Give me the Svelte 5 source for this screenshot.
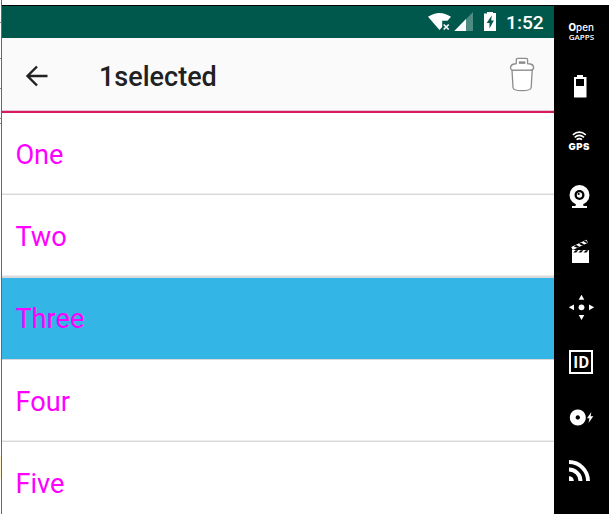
<script>
  const items = ['One', 'Two', 'Three', 'Four', 'Five'];
  const selected = 'Three';
</script>

<div class="window">
  <div class="edge">
    <i class="t1"></i><i class="t2"></i><i class="t3"></i><i class="t4"></i><i class="t5"></i><b></b>
  </div>
  <main class="screen">
    <header class="status">
      <svg class="signals" width="72" height="32" viewBox="0 0 72 32">
        <path d="M0 10.8Q11.5 3 23 10.8L19.5 14.8H14.2V21L11.5 24Z" fill="#fff" />
        <path d="M15.7 18.5l5 5m0-5l-5 5" stroke="#fff" stroke-width="1.7" />
        <path d="M45 6V25H26.3Z" fill="#4d8c82" />
        <path d="M38 13V25H26.3Z" fill="#fff" />
        <path d="M59 6.8V6h6v1h3v18H56V7.5h3Z" fill="#fff" />
        <path d="M63.7 9.5L58.7 17h2.8v5.5l4.4-8h-2.7Z" fill="#00574b" />
      </svg>
      <time>1:52</time>
    </header>
    <div class="toolbar">
      <svg class="back" width="24" height="24" viewBox="0 0 24 24">
        <path d="M22.5 12H3M12 2.5L2.5 12l9.5 9.5" fill="none" stroke="#212121" stroke-width="2.4" />
      </svg>
      <h1>1selected</h1>
      <svg class="trash" width="26" height="36" viewBox="0 0 26 36">
        <g fill="#fff" stroke="#8c8c8c" stroke-width="1.3">
          <path d="M3 13L4 30.5Q4.3 33.7 13 33.7T22.2 30.5L23.2 13Z" />
          <path d="M1.5 10.5Q2 7.6 5 7L7.3 6.6V3Q7.3 1.4 9 1.4H17Q18.6 1.4 18.6 3V6.6L21.4 7Q24.3 7.6 24.6 10.5Q24.6 13.2 21.5 13.2H4.7Q1.5 13.2 1.5 10.5Z" />
          <path d="M10.5 5H15.7V6.2H10.5Z" />
        </g>
      </svg>
    </div>
    <ul>
      {#each items as item}
        <li class:selected={item === selected}>{item}</li>
      {/each}
    </ul>
  </main>
  <aside>
    <svg viewBox="0 0 55 55">
      <text x="14.5" y="26.3" class="open" textLength="25.3"><tspan class="cap">O</tspan>pen</text>
      <text x="14.7" y="35" class="gapps" textLength="25.5" lengthAdjust="spacingAndGlyphs">GAPPS</text>
    </svg>
    <svg viewBox="0 0 55 55">
      <path d="M23 15h6v2h3.5v20.5H20V17h3ZM22 19v7h8v-7Z" fill-rule="evenodd" />
    </svg>
    <svg viewBox="0 0 55 55">
      <g fill="none" stroke="#fff" stroke-width="1.7">
        <path d="M18.8 19.8Q25.3 14.6 31.8 19.8M20.7 22.3Q25.3 18.5 30 22.3M22.6 24.6Q25.3 22.5 28 24.6" />
      </g>
      <text x="14.5" y="35" class="gps" textLength="21">GPS</text>
    </svg>
    <svg viewBox="0 0 55 55">
      <circle cx="25.5" cy="25" r="10" />
      <path d="M22 33.5h7l.5 2.5H33v2H18v-2h3.5Z" />
      <circle cx="25.5" cy="25" r="5" fill="#000" />
      <circle cx="25.5" cy="25" r="2.7" />
      <circle cx="24.7" cy="24" r="1.1" fill="#000" />
    </svg>
    <svg viewBox="0 0 55 55">
      <path d="M18 25H35V38H18ZM17.2 22L32.5 14.8l1.5 3L18.7 25Z" />
      <path d="M19.3 27.5l2.3-2.2h2.8L22.2 27.5ZM24.4 27.5l2.3-2.2h2.8L27.2 27.5ZM29.5 27.5l2.3-2.2h2.8L32.4 27.5ZM19.8 21.2l3.3 1.6 2.4-1.1-3.2-1.7ZM24.8 18.8l3.2 1.7 2.4-1.1-3.2-1.7ZM29.6 16.6l2.8 1.5 1.5-.7-2.4-1.8Z" fill="#000" />
    </svg>
    <svg viewBox="0 0 55 55">
      <circle cx="27.5" cy="27.3" r="2.9" />
      <path d="M27.5 14.7l2.8 5h-5.6ZM27.5 40l2.8-5h-5.6ZM14.8 27.3l5.2-2.9v5.8ZM40.2 27.3L35 24.4v5.8Z" />
    </svg>
    <svg viewBox="0 0 55 55">
      <rect x="16" y="16" width="22" height="22" fill="none" stroke="#fff" stroke-width="2" />
      <text x="19.2" y="33" class="id" textLength="16" lengthAdjust="spacingAndGlyphs">ID</text>
    </svg>
    <svg viewBox="0 0 55 55">
      <path d="M23.8 19.5a8 8 0 1 0 .01 0ZM23.8 25.3a2.2 2.2 0 1 1-.01 0Z" fill-rule="evenodd" />
      <path d="M37.3 22L33 28.3h2.5L34.5 33l4.8-6.8h-2.7Z" />
    </svg>
    <svg viewBox="0 0 55 55">
      <path d="M15 31.2A4.8 4.8 0 0 1 19.8 36H15Z" />
      <g fill="none" stroke="#fff" stroke-width="3.9">
        <path d="M15 24.5A11.5 11.5 0 0 1 26.5 36M15 17A19 19 0 0 1 34 36" />
      </g>
    </svg>
  </aside>
</div>

<style>
  :global(body) { background: #fff; overflow: hidden; }
  .window {
    display: grid;
    grid-template-columns: 2px 552px 55px;
    height: 514px;
    overflow: hidden;
    box-sizing: border-box;
    padding-top: 5px;
    font-family: Roboto, sans-serif;
  }
  .edge { position: relative; border-right: 1px solid #66696b; margin-top: -5px; }
  .edge i, .edge b { position: absolute; left: 0; width: 1px; height: 1px; background: #888; }
  .t1 { top: 22px; }
  .t2 { top: 58px; }
  .t3 { top: 88px; }
  .t4 { top: 118px; }
  .t5 { top: 123px; }
  .edge b { top: 456px; height: 23px; background: #fff5cf; }
  .screen { border-top: 1px solid #000; overflow: hidden; }
  .status {
    height: 32px;
    background: #00574b;
    color: #fff;
    display: flex;
    align-items: flex-start;
    justify-content: flex-end;
    padding-right: 10px;
  }
  .signals { margin-right: 6px; }
  time { width: 38px; font-size: 19.2px; line-height: 32px; font-weight: 500; white-space: nowrap; padding-top: 1px; }
  .toolbar {
    height: 73px;
    background: #fafafa;
    border-bottom: 2px solid #d81b60;
    box-shadow: inset 0 -1px #e6c3d0;
    display: flex;
    align-items: center;
    padding: 0 19px 0 23px;
  }
  .back { margin-top: 2px; }
  h1 { flex: 1; margin: 5px 0 0 50px; font-size: 27px; line-height: 32px; font-weight: 500; color: #212121; }
  .trash { margin-top: 1px; }
  ul { margin: 0; padding: 0; list-style: none; }
  li {
    height: 82.2px;
    box-sizing: border-box;
    border-bottom: 1px solid #d9d9d9;
    box-shadow: inset 0 -1px #eee;
    padding: 1px 13.4px 0;
    font-size: 27.2px;
    line-height: 82px;
    color: #f0f;
  }
  .selected { background: #33b5e5; box-shadow: inset 0 1px #dcdcdc; }
  aside { background: #000; display: flex; flex-direction: column; overflow: hidden; }
  aside svg { width: 55px; height: 55px; flex: none; fill: #fff; }
  .open { font: 500 9.8px/1 Inter, sans-serif; }
  .cap { font-weight: 800; }
  .gapps { font: 600 7px/1 "Open Sans", sans-serif; }
  .gps { font: 900 9.6px/1 Inter, sans-serif; }
  .id { font: 700 15.5px/1 "Open Sans", sans-serif; }
</style>
